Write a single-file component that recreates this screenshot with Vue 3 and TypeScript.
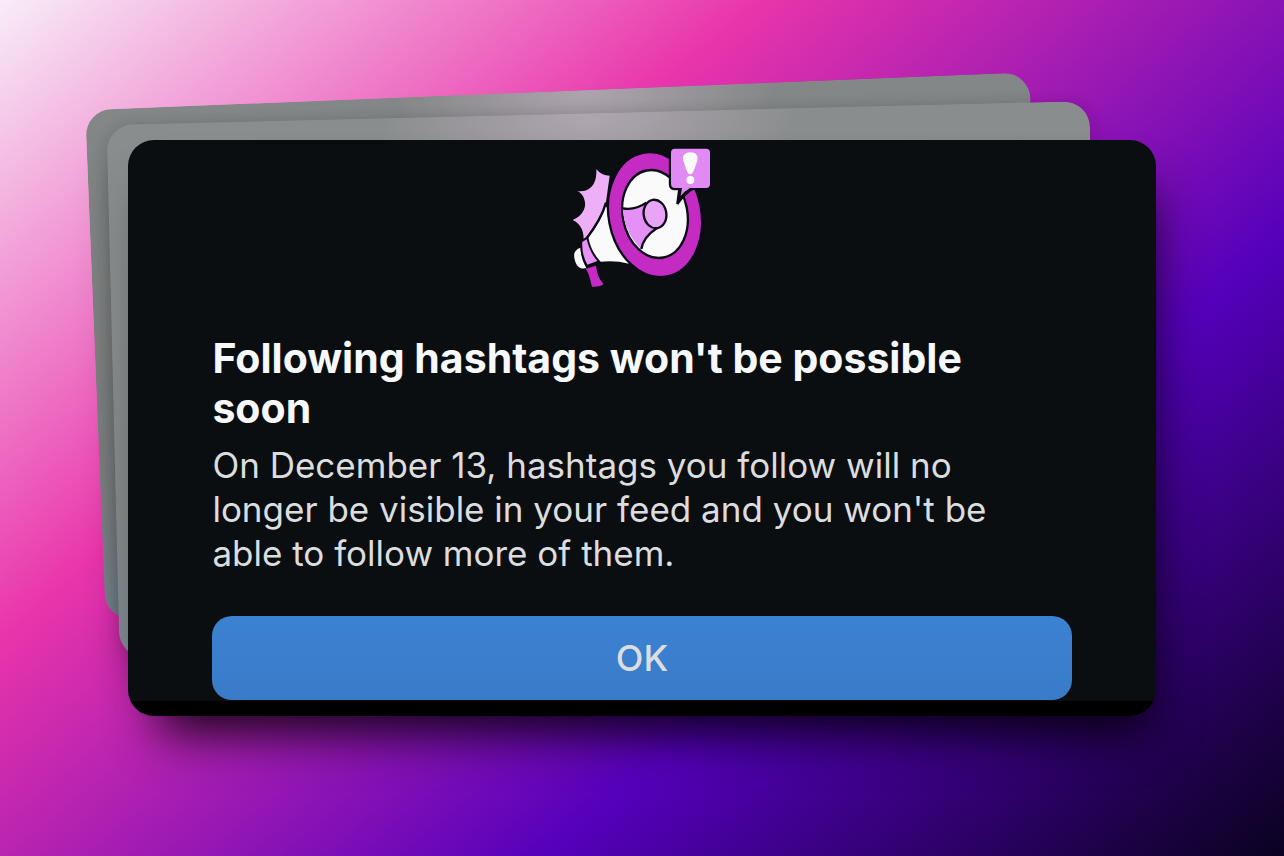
<script setup lang="ts">
import { ref } from 'vue'

interface Notice {
  title: string
  body: string
  action: string
}

const notice: Notice = {
  title: "Following hashtags won't be possible soon",
  body: "On December 13, hashtags you follow will no longer be visible in your feed and you won't be able to follow more of them.",
  action: 'OK',
}

const acknowledged = ref(false)
</script>

<template>
  <main class="scene">
    <div class="stack">
      <div class="sheet sheet-back" aria-hidden="true"></div>
      <div class="sheet sheet-middle" aria-hidden="true"></div>
      <section class="card" role="dialog" aria-labelledby="notice-title" aria-describedby="notice-body">
        <svg class="megaphone" viewBox="0 0 495 465" aria-hidden="true">
          <!-- burst behind the horn -->
          <path d="M109 87 C119 101 134 106 149 107 L136 200 C120 240 98 262 71 303 C72 280 66 252 38 240 C62 231 78 209 75 187 C72 169 64 158 50 152 C80 159 112 143 109 87 Z" fill="#edb0f7" />
          <!-- horn body -->
          <path d="M136 196 C127 232 107 265 84 291 C84 320 100 350 120 365 C150 362 177 363 207 371 C178 330 151 290 145 210 Z" fill="#fafafa" />
          <path d="M138 188 C126 232 104 264 78 298" fill="none" stroke="#0b0a16" stroke-width="7" />
          <!-- mouthpiece -->
          <path d="M62 323 C43 329 39 343 45 362 C50 381 63 389 79 384 C68 365 62 345 62 323 Z" fill="#fafafa" />
          <path d="M82 293 L64 304 C62 334 69 358 81 378 L117 364 C99 345 88 322 82 293 Z" fill="#e693f5" stroke="#0b0a16" stroke-width="6" />
          <!-- handle -->
          <path d="M77 386 L108 377 C111 398 116 417 131 432 C120 441 108 440 96 440 C91 422 89 404 77 386 Z" fill="#c52bc4" />
          <!-- rim -->
          <ellipse cx="285" cy="224" rx="139" ry="189" transform="rotate(-11 285 224)" fill="#c42bc3" stroke="#0b0a16" stroke-width="7" />
          <ellipse cx="285" cy="222" rx="97" ry="133" transform="rotate(-11 285 222)" fill="#fafafa" stroke="#0b0a16" stroke-width="7" />
          <!-- inner cone -->
          <path d="M188 205 C216 210 239 202 259 188 L291 264 C270 283 252 303 244 327 C210 298 191 250 188 205 Z" fill="#e490f6" />
          <path d="M188 205 C216 210 239 202 259 188 M291 264 C270 278 248 301 244 327" fill="none" stroke="#0b0a16" stroke-width="7" />
          <ellipse cx="285" cy="222" rx="34" ry="43" transform="rotate(-9 285 222)" fill="#e9a4f6" stroke="#0b0a16" stroke-width="7" />
          <!-- alert bubble -->
          <path d="M343 24 H439 Q452 24 452 37 V133 Q452 147 439 147 H397 C379 157 365 174 352 192 L358 147 H343 Q330 147 330 133 V37 Q330 24 343 24 Z" fill="#0b0a16" stroke="#0b0a16" stroke-width="7" />
          <path d="M345 26 H438 Q450 26 450 38 V132 Q450 144 438 144 H390 Q374 153 362 168 L366 144 H345 Q333 144 333 132 V38 Q333 26 345 26 Z" fill="#e18af4" />
          <path d="M391 37 C411 37 417 51 410 68 C404 84 400 103 391 103 C381 103 378 84 372 68 C365 51 371 37 391 37 Z" fill="#fafafa" />
          <circle cx="391" cy="120" r="12" fill="#fafafa" />
        </svg>
        <div class="content">
          <h1 id="notice-title" class="title">{{ notice.title }}</h1>
          <p id="notice-body" class="body">{{ notice.body }}</p>
          <button class="confirm" type="button" :aria-pressed="acknowledged" @click="acknowledged = true">
            {{ notice.action }}
          </button>
        </div>
      </section>
    </div>
  </main>
</template>

<style>
body {
  margin: 0;
}
</style>

<style scoped>
.scene {
  box-sizing: border-box;
  min-height: 100vh;
  display: flex;
  align-items: center;
  justify-content: center;
  overflow: hidden;
  background: linear-gradient(140deg, #f8edf8 0%, #e935ab 33%, #5500bb 68%, #0a0220 100%);
  font-family: Inter, "Liberation Sans", sans-serif;
}

.stack {
  position: relative;
  width: 80%;
}

.sheet {
  position: absolute;
  border-radius: 26px;
}

.sheet-back {
  left: -3.3%;
  top: -8.5%;
  width: 92%;
  height: 88.5%;
  transform: rotate(-2.3deg);
  background:
    radial-gradient(ellipse 190px 90px at 53% 0, #aea4af, transparent),
    linear-gradient(#848787, #7c7f7f 70%, #75828c);
}

.sheet-middle {
  left: -1.5%;
  top: -4.7%;
  width: 95.7%;
  height: 92.5%;
  transform: rotate(-1.4deg);
  background:
    radial-gradient(ellipse 210px 100px at 49% 0, #b0a6b1, transparent),
    linear-gradient(#8a8d8d, #858888 70%, #7d8a92);
  box-shadow:
    0 0 14px rgba(0, 0, 0, 0.12),
    0 26px 40px -10px rgba(0, 0, 0, 0.35);
}

.card {
  position: relative;
  display: flex;
  flex-direction: column;
  align-items: center;
  padding-bottom: 16px;
  overflow: hidden;
  border-radius: 26px;
  background: linear-gradient(to top, #000 15px, #0a0e11 15px);
  box-shadow: 12px 34px 50px -18px rgba(0, 0, 0, 0.9);
}

.megaphone {
  display: block;
  width: 165px;
  height: 155px;
}

.content {
  box-sizing: border-box;
  width: 100%;
  padding: 38px 84px 0;
}

.title {
  margin: 0;
  padding-right: 48px;
  color: #f7f8fa;
  font-size: 41px;
  font-weight: 700;
  line-height: 50px;
}

.body {
  margin: 0;
  padding: 10px 48px 0 0;
  color: #dcdddf;
  font-size: 35px;
  font-weight: 400;
  line-height: 44px;
}

.confirm {
  display: block;
  width: 100%;
  height: 84px;
  margin-top: 41px;
  border: 0;
  border-radius: 20px;
  background: linear-gradient(#3c82d2, #397bc8);
  color: #dcdddf;
  font: 500 36px/44px Inter, "Liberation Sans", sans-serif;
  cursor: pointer;
}
</style>
